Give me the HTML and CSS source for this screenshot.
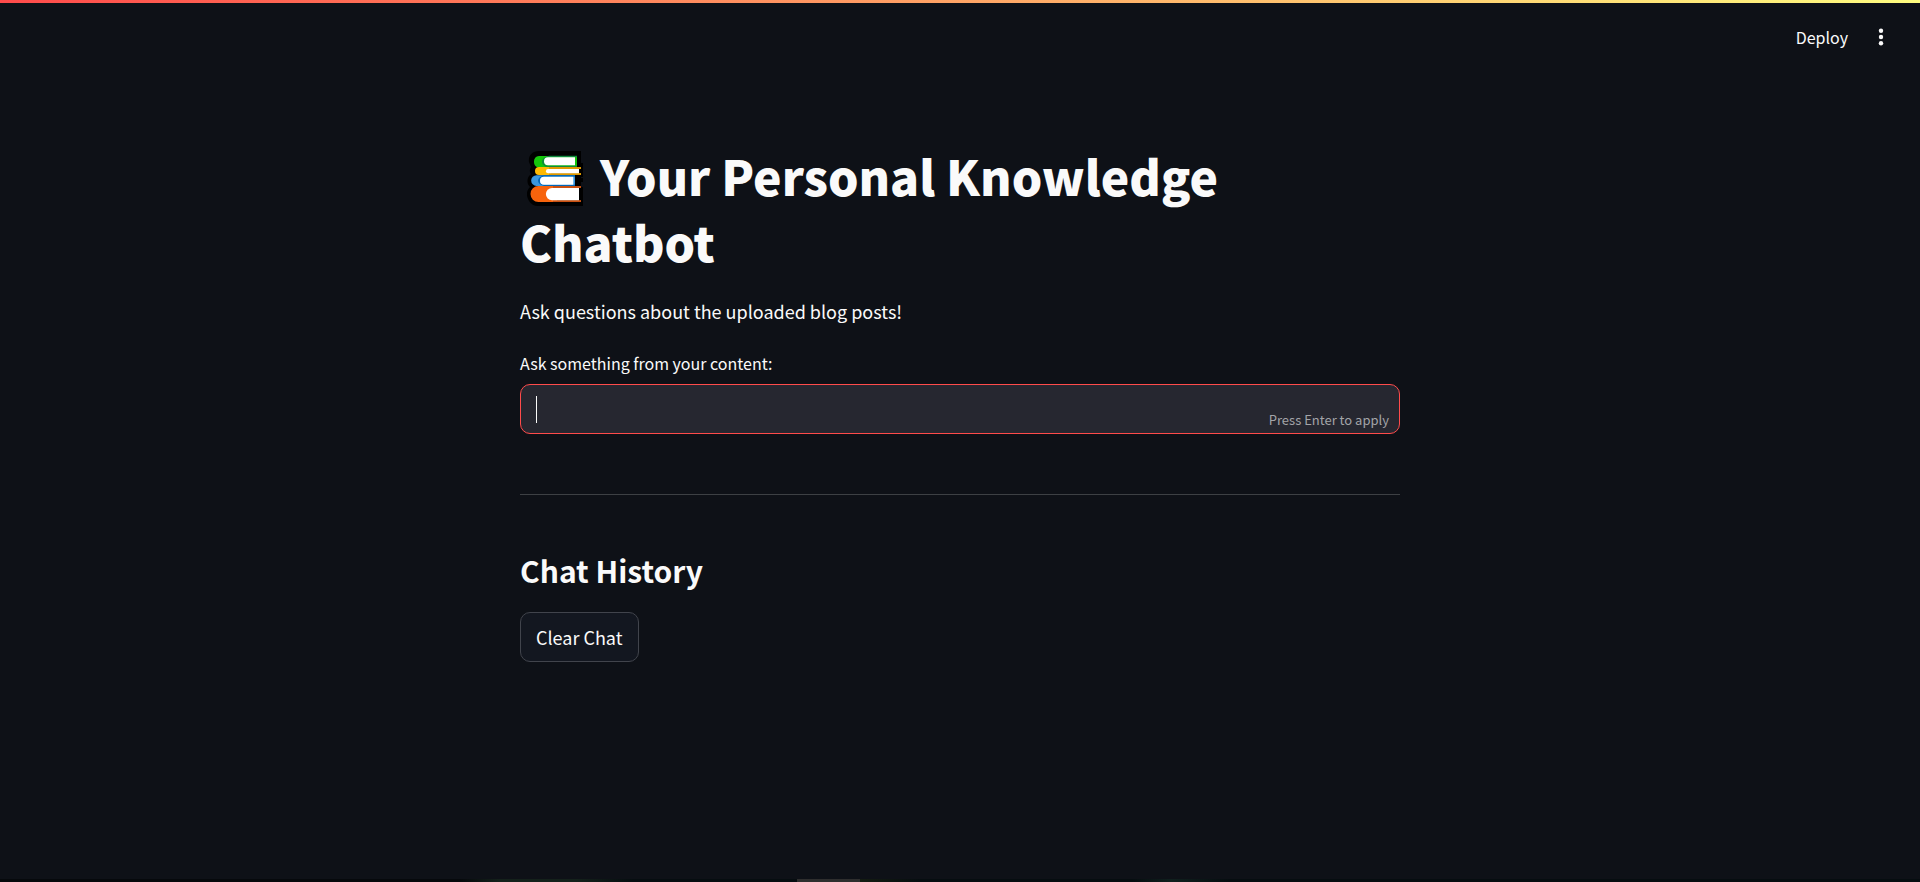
FILE: index.html
```html
<!DOCTYPE html>
<html lang="en">
<head>
<meta charset="utf-8">
<title>Your Personal Knowledge Chatbot</title>
<link rel="stylesheet" href="styles.css">
</head>
<body>
<div class="decoration"></div>
<header class="toolbar">
  <button class="toolbar-btn" type="button">Deploy</button>
  <button class="toolbar-btn menu-btn" type="button" aria-label="Main menu">
    <svg width="6" height="18" viewBox="0 0 6 18" fill="#fafafa"><circle cx="3" cy="2.700" r="2.200"/><circle cx="3" cy="9" r="2.200"/><circle cx="3" cy="15.300" r="2.200"/></svg>
  </button>
</header>
<main class="content">
  <h1 class="title"><svg class="books" viewBox="0 0 56 55" role="img" aria-label="Books">
    <path fill="#000" d="M54 0H12C5 0 1 5 2 11l2 5c-2 3-1 6 0 7-4 3-5 9-1 13-4 4-4 9-1 14 2 3 5 5 9 5h45V36h-2v-5h2v-4h-2v-1h2V12h-2z"/>
    <path fill="#16c60c" d="M50 5H12a5.800 5.800 0 0 0 0 11.500h38z"/>
    <path fill="#10893e" d="M50 4.700H22c-4 1-7 3-7 6s3 5 7 5.800h28v-1.800H21a4 4 0 0 1 0-8.400h29z"/>
    <path fill="#fff" d="M48 6.300H21a4 4 0 0 0 0 8h27z"/>
    <path fill="#ffb900" d="M54 16H12a4 4 0 0 0 0 8h42v-1.700H24V18h30z"/>
    <path fill="#e09a00" d="M54 16H22v2h32zM54 22.300H22V24h32z"/>
    <path fill="#fff" d="M52 18.100H21a2 2 0 0 0 0 4.100h31z"/>
    <path fill="#3a96dd" d="M48 24.200H9.500a5.300 5.300 0 0 0 0 10.700H48z"/>
    <path fill="#0067b8" d="M48 24.200H17c-4 1-6 3-6 5.300s2 4.600 6 5.500h31v-1.300H17a4 4 0 0 1 0-8h31z"/>
    <path fill="#fff" d="M46.300 25.700H17a4 4 0 0 0 0 8h29.300z"/>
    <path fill="#f7630c" d="M54 35H11.500a8 8 0 0 0 0 16H54v-1.500H30V37h24z"/>
    <path fill="#ca5010" d="M54 35H26v2h28zM54 49.200H26V51h28z"/>
    <path fill="#fff" d="M52 37H25a6 6 0 0 0 0 12.200h27z"/>
  </svg> Your Personal Knowledge Chatbot</h1>
  <p class="intro">Ask questions about the uploaded blog posts!</p>
  <form class="ask">
    <label class="ask-label" for="question">Ask something from your content:</label>
    <div class="field">
      <input class="field-input" id="question" type="text" autocomplete="off">
      <span class="caret"></span>
      <span class="hint">Press Enter to apply</span>
    </div>
  </form>
  <hr class="divider">
  <h2 class="subtitle">Chat History</h2>
  <button class="clear-btn" type="button">Clear Chat</button>
</main>
<div class="bottom-edge"></div>
</body>
</html>
```
FILE: styles.css
```css
* { box-sizing: border-box; }

body {
  margin: 0;
  min-height: 100vh;
  background: #0e1117;
  color: #fafafa;
  font-family: "Noto Sans CJK SC", "Noto Sans", sans-serif;
  font-size: 18px;
  line-height: 32px;
}

button, input { font: inherit; color: inherit; }

.decoration {
  position: fixed;
  inset: 0 0 auto;
  height: 3px;
  background: linear-gradient(to right, #ff4b4b, #fffd80);
}

.toolbar {
  display: flex;
  align-items: center;
  justify-content: flex-end;
  gap: 30px;
  height: 74px;
  padding: 0 36px 0 0;
}

.toolbar-btn {
  display: flex;
  padding: 0;
  border: 0;
  background: none;
  font-size: 16px;
}

.content {
  width: 100%;
  max-width: 880px;
  margin: 68px auto 0;
}

.title {
  margin: 0;
  font-size: 48px;
  font-weight: 900;
  line-height: 66px;
}

.books {
  width: 56px;
  height: 55px;
  margin: 0 6px 0 7px;
  vertical-align: -10px;
}

.intro { margin: 21px 0 20px; }

.ask-label {
  display: block;
  margin-bottom: 5px;
  font-size: 16px;
}

.field { position: relative; }

.field-input {
  display: block;
  width: 100%;
  height: 50px;
  padding: 0 15px;
  border: 1px solid #ff4b4b;
  border-radius: 10px;
  outline: 0;
  background: #262730;
}

.caret {
  position: absolute;
  top: 12px;
  left: 16px;
  width: 1px;
  height: 27px;
  background: #fafafa;
}

.hint {
  position: absolute;
  right: 11px;
  bottom: 4px;
  color: #a3a4a8;
  font-size: 13px;
  line-height: 20px;
}

.divider {
  margin: 60px 0 57px;
  border: 0;
  border-top: 1px solid #3d4044;
}

.subtitle {
  margin: 0 0 24px;
  font-size: 30px;
  font-weight: 600;
  line-height: 36px;
}

.clear-btn {
  height: 50px;
  padding: 0 15px;
  border: 1px solid #41444c;
  border-radius: 10px;
  background: #131720;
}

.bottom-edge {
  position: fixed;
  inset: auto 0 0;
  height: 3px;
  background: linear-gradient(to right, #06090c 24%, #14211b 26%, #14211b 30%, #060d10 33%, #060d10 41.500%, #2e2e2e 41.500%, #2e2e2e 44.800%, #141c12 44.800%, #060d10 48%, #060d10 59%, #10201e 61%, #060d10 64%);
}
```
